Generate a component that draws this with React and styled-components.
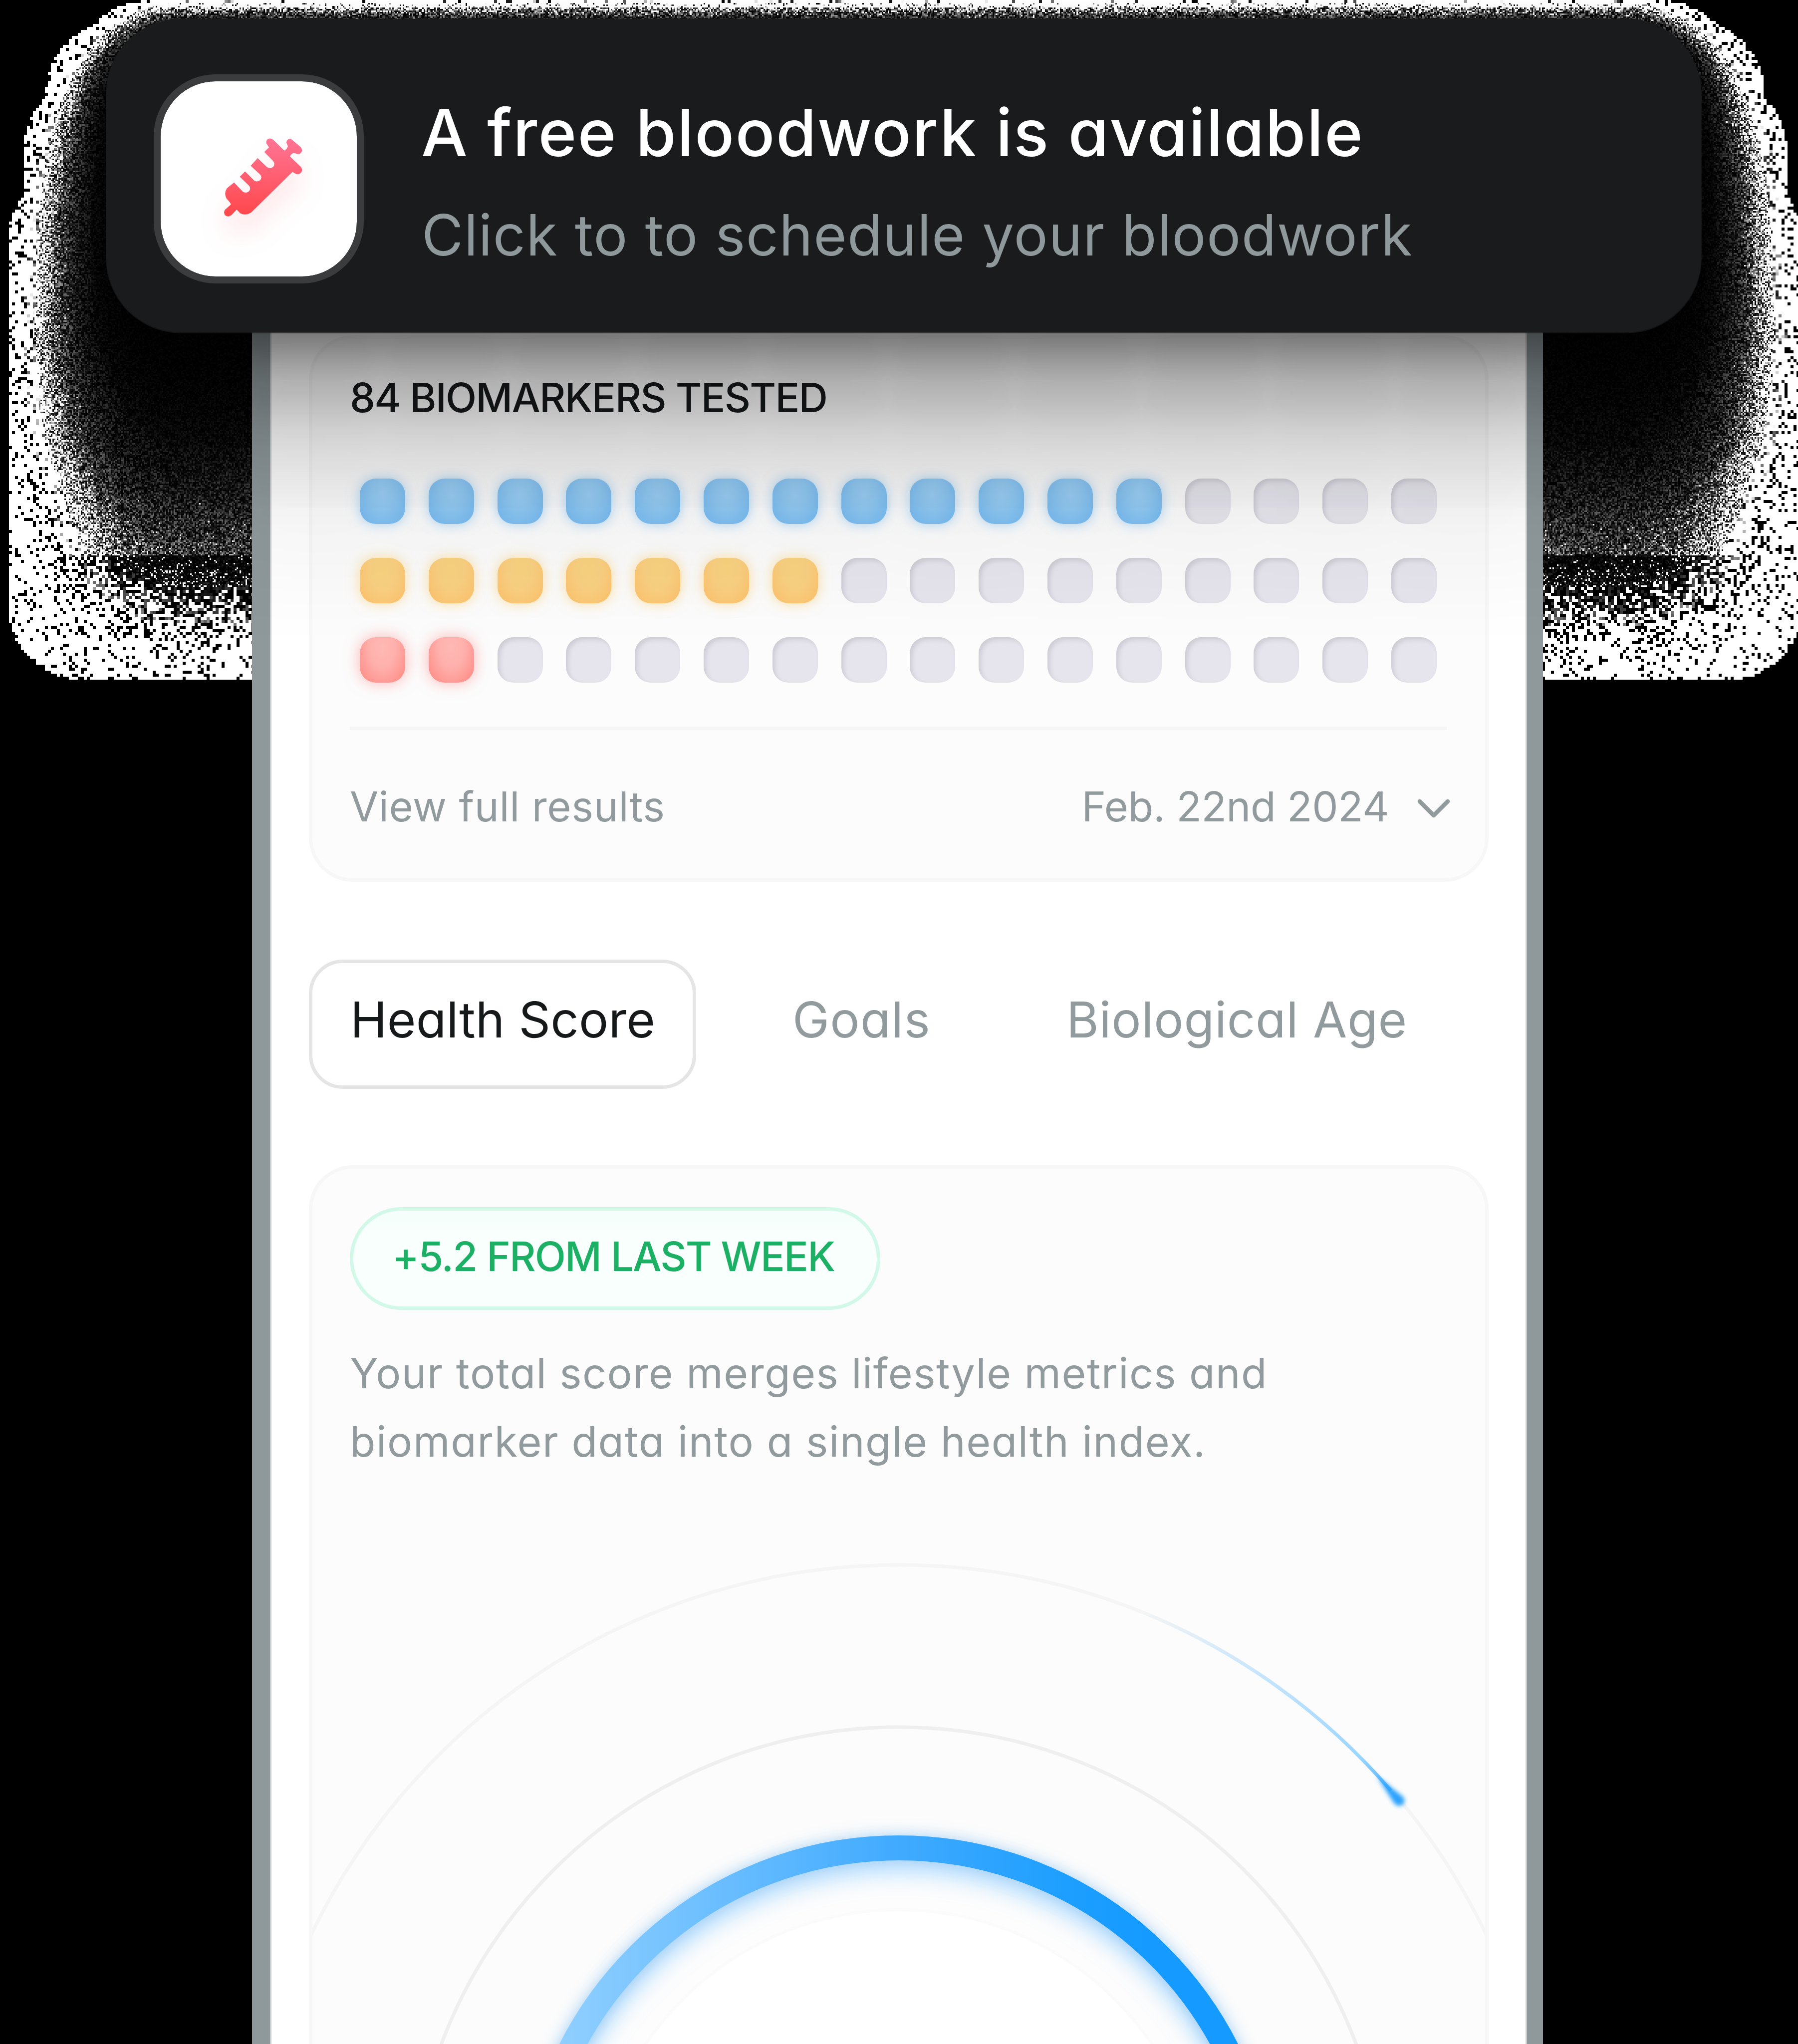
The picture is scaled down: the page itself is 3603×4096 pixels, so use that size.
import React, { useLayoutEffect, useRef } from "react";
import styled, { createGlobalStyle } from "styled-components";

const GlobalStyle = createGlobalStyle`
  * { box-sizing: border-box; }
  html, body { margin: 0; padding: 0; background: #000; }
`;

/* ---------- Layout shell ---------- */

const Page = styled.div`
  position: relative;
  width: 3603px;
  height: 4096px;
  overflow: hidden;
  background: #000;
  font-family: Inter, "Open Sans", sans-serif;
  font-feature-settings: "cv11" 1;
  display: flex;
  flex-direction: column;
  padding: 37px 194px 0 213px;
`;

const GrainCanvas = styled.canvas`
  position: absolute;
  left: 0;
  top: 0;
  width: 3603px;
  height: 1362px;
  image-rendering: pixelated;
`;

/* ---------- Notification ---------- */

const Notification = styled.section`
  position: relative;
  z-index: 2;
  flex: none;
  height: 629px;
  display: flex;
  align-items: flex-start;
  gap: 117px;
  padding: 112px 95px 0;
  border-radius: 150px;
  background: #191b1c;
  box-shadow:
    0 1px 0 1px rgba(25, 27, 28, 0.7),
    0 30px 69px rgba(0, 0, 0, 0.29),
    0 124px 124px rgba(0, 0, 0, 0.26),
    0 279px 167px rgba(0, 0, 0, 0.15),
    0 493px 197px rgba(0, 0, 0, 0.04);
`;

const IconTile = styled.div`
  flex: none;
  width: 421px;
  height: 419px;
  display: flex;
  align-items: center;
  justify-content: center;
  padding: 0 0 7px 16px;
  border: 14px solid #3b3c3d;
  border-radius: 124px;
  background: #fff;
  background-clip: padding-box;
`;

const SyringeSvg = styled.svg`
  width: 156px;
  height: 157px;
  overflow: visible;
  filter: drop-shadow(0 38px 26px rgba(255, 80, 100, 0.14));
`;

const NotificationText = styled.div`
  display: flex;
  flex-direction: column;
  gap: 55px;
  padding-top: 37px;
`;

const NotificationTitle = styled.div`
  font-size: 131px;
  line-height: 160px;
  font-weight: 500;
  letter-spacing: 2.2px;
  margin-left: -2px;
  color: #fff;
  white-space: nowrap;
`;

const NotificationSubtitle = styled.div`
  font-size: 114px;
  line-height: 140px;
  letter-spacing: 1.4px;
  margin-left: -1px;
  color: #8f999b;
  white-space: nowrap;
`;

/* ---------- Phone ---------- */

const Phone = styled.main`
  position: relative;
  flex: 1;
  margin: -366px 317px 0 292px;
  border: solid #8f999c;
  border-width: 0 32px 0 36px;
  background: #fff;
  box-shadow: inset 3px 0 0 #c9ced0, inset -3px 0 0 #c9ced0;
  padding: 372px 77px 0 78px;
  overflow: hidden;
`;

const Card = styled.section`
  display: flex;
  flex-direction: column;
  border: 7px solid #f7f7f7;
  border-radius: 88px;
  background: #fcfcfc;
  padding: 0 77px 0 75px;
`;

const BiomarkerCard = styled(Card)`
  height: 1095px;
  padding-top: 68px;
`;

const CardTitle = styled.h2`
  margin: 0 0 112px;
  font-size: 81px;
  line-height: 100px;
  font-weight: 500;
  letter-spacing: -1.8px;
  color: #16191a;
  white-space: nowrap;
`;

const DotGrid = styled.div`
  display: flex;
  flex-direction: column;
  gap: 68px;
  padding-left: 20px;
`;

const DotRow = styled.div`
  display: flex;
  gap: 46.8px;
`;

const tones = {
  blue: `background: radial-gradient(ellipse at 50% 32%, #9ccff6 0%, #91caf4 35%, #77bbf2 90%);
    box-shadow: 0 0 24px rgba(110, 185, 245, 0.55);`,
  amber: `background: radial-gradient(ellipse at 50% 25%, #f9d380 0%, #fad182 40%, #fcc26c 95%);
    box-shadow: 0 0 26px rgba(255, 205, 100, 0.6);`,
  red: `background: radial-gradient(ellipse at 50% 22%, #ffb9b5 0%, #ffb0ac 40%, #ff8d87 90%);
    box-shadow: 0 0 30px rgba(255, 120, 120, 0.55);`,
  empty: `background: #e6e5ed;
    box-shadow: inset 5px 5px 9px rgba(110, 110, 120, 0.2);`,
};

const Dot = styled.span`
  width: 91px;
  height: 91px;
  flex: none;
  border-radius: 32px;
  ${({ $tone }) => tones[$tone]}
`;

const Divider = styled.hr`
  width: 100%;
  height: 7px;
  margin: 88px 0 103px;
  border: 0;
  flex: none;
  background: #f5f5f5;
`;

const FooterRow = styled.div`
  display: flex;
  justify-content: space-between;
  align-items: center;
`;

const Muted = styled.span`
  font-size: 83px;
  line-height: 100px;
  letter-spacing: ${({ $ls }) => $ls}px;
  color: #919b9d;
  white-space: nowrap;
`;

const DateSelect = styled.div`
  display: flex;
  align-items: center;
  gap: 56px;
  margin-right: -8px;
`;

const ChevronSvg = styled.svg`
  width: 68px;
  height: 42px;
  margin-top: 10px;
`;

/* ---------- Tabs ---------- */

const Tabs = styled.nav`
  display: flex;
  margin: 156px 0 153px;
`;

const Tab = styled.button`
  height: 259px;
  padding: 53px 76px 0;
  margin: 0 0 0 ${({ $gap }) => $gap}px;
  border: 7px solid ${({ $active }) => ($active ? "#e5e5e5" : "transparent")};
  border-radius: 68px;
  background: ${({ $active }) => ($active ? "#fff" : "transparent")};
  color: ${({ $active }) => ($active ? "#16191a" : "#919b9d")};
  width: ${({ $width }) => $width}px;
  display: flex;
  align-items: flex-start;
  font: 400 99px/120px Inter, "Open Sans", sans-serif;
  font-feature-settings: "cv11" 1;
  letter-spacing: ${({ $ls }) => $ls}px;
  white-space: nowrap;
`;

/* ---------- Score card ---------- */

const ScoreCard = styled(Card)`
  height: 2200px;
  padding-top: 77px;
`;

const Pill = styled.div`
  align-self: flex-start;
  width: 1063px;
  height: 206px;
  padding: 42px 78px 0;
  border: 7px solid #d2f8e8;
  border-radius: 103px;
  background: linear-gradient(#f5fefb, #f9fffd 30%);
  font-size: 81px;
  line-height: 100px;
  font-weight: 500;
  letter-spacing: -1.8px;
  color: #1cb065;
  white-space: nowrap;
`;

const Description = styled.p`
  margin: 58px 0 0;
  font-size: 84px;
  line-height: 137px;
  letter-spacing: ${({ $ls }) => $ls}px;
  color: #919b9d;
  white-space: nowrap;
  & + & {
    margin-top: 0;
  }
`;

const GaugeSvg = styled.svg`
  flex: none;
  display: block;
  width: 2350px;
  height: 1139px;
  margin-left: -75px;
`;

/* ---------- Shadow grain ---------- */

const SHADOWS = [
  [30, 34, 0.29],
  [124, 62, 0.26],
  [279, 84, 0.15],
  [493, 100, 0.04],
];
const BOX = { left: 213, right: 3409, top: 37, bottom: 666, radius: 150 };
const COARSE_BELOW = 2.6;
const TAIL_TOP = 1110;

const sigmoid = (z) => 1 / (1 + Math.exp(-1.702 * z));

function hash(x, y, seed) {
  let h = (x * 374761393 + y * 668265263 + seed * 1442695041) | 0;
  h = Math.imul(h ^ (h >>> 13), 1274126177);
  h = Math.imul(h ^ (h >>> 15), 2246822519);
  return ((h ^ (h >>> 16)) >>> 0) / 4294967296;
}

/* Signed distance to the rounded box, moved down by dy and grown on every side; negative inside. */
function boxDistance(x, y, dy, grow) {
  const r = BOX.radius;
  const cx = (BOX.left + BOX.right) / 2;
  const cy = (BOX.top + BOX.bottom) / 2 + dy;
  const qx = Math.abs(x - cx) - ((BOX.right - BOX.left) / 2 + grow - r);
  const qy = Math.abs(y - cy) - ((BOX.bottom - BOX.top) / 2 + grow - r);
  return (
    Math.hypot(Math.max(qx, 0), Math.max(qy, 0)) +
    Math.min(Math.max(qx, qy), 0) -
    r
  );
}

/* Shadow opacity (0-255) at a point, and how far inside the blur's outer reach it lies. */
function sampleShadow(x, y) {
  let keep = 1;
  let reach = -Infinity;
  for (const [dy, sigma, alpha] of SHADOWS) {
    const d = boxDistance(x, y, dy, 0);
    keep *= 1 - alpha * sigmoid(-d / (sigma * 0.88));
    reach = Math.max(reach, -boxDistance(x, y, dy, 2 * sigma));
  }
  return [255 * (1 - keep), reach];
}

function grainLevel(i, j, cell) {
  let [a, reach] = sampleShadow(i * cell, j * cell);
  let ri = i;
  let rj = j;
  const tail = j * cell > TAIL_TOP;
  if (a < (tail ? 4.5 : COARSE_BELOW)) {
    ri = i >> 1;
    rj = j >> 1;
    [a, reach] = sampleShadow(ri * cell * 2, rj * cell * 2);
  }
  if (reach <= 0) return 0;
  const lit = hash(ri, rj, 2);
  const level = hash(ri, rj, 3);
  let white = tail
    ? 0.9 * Math.exp(-Math.pow(a / 3.1, 1.3))
    : 0.9 * Math.exp(-Math.pow(a / 4, 1.5));
  if (reach < 14) white = Math.max(white, 0.82);
  if (lit < white) return 255;
  if (a < 1.5) return 0;
  if (tail) return level < 0.4 ? Math.min(255, (255 * lit) / a) : 0;
  return Math.min(255, (255 * (a < 40 ? 6 : 4.5) * level * level) / a);
}

function ShadowGrain() {
  const ref = useRef(null);
  useLayoutEffect(() => {
    const { width, height } = ref.current;
    const ctx = ref.current.getContext("2d");
    const img = ctx.createImageData(width, height);
    for (let j = 0; j < height; j++) {
      for (let i = 0; i < width; i++) {
        const k = (j * width + i) * 4;
        const v = grainLevel(i, j, 3);
        img.data[k] = v;
        img.data[k + 1] = v;
        img.data[k + 2] = v;
        img.data[k + 3] = 255;
      }
    }
    ctx.putImageData(img, 0, 0);
  }, []);
  return <GrainCanvas ref={ref} width={1201} height={454} />;
}

/* ---------- Drawings ---------- */

function Syringe() {
  return (
    <SyringeSvg viewBox="228 165 600 603">
      <defs>
        <linearGradient id="syringe" x1="0" y1="0" x2="0" y2="1">
          <stop offset="0" stopColor="#ff7595" />
          <stop offset="1" stopColor="#ff474b" />
        </linearGradient>
      </defs>
      <path
        fill="url(#syringe)"
        d="M570 168Q588 164 606 175L692 260Q712 250 720 226L709 200Q706 170 742 168L818 232Q832 246 828 264Q820 286 798 288L764 277Q742 288 735 304L822 388Q834 404 825 425Q810 446 782 440L755 424L436 738Q395 764 352 742L325 715L286 756Q256 778 234 756Q222 735 236 715L281 675Q274 655 248 632Q224 590 250 550L305 506L372 576Q396 592 418 575Q438 556 422 532L349 462L390 420L462 492Q484 504 504 490Q524 470 508 446L433 377L487 317L558 387Q584 404 606 386Q624 364 608 342L538 270L574 235L555 205Q548 180 570 168Z"
      />
    </SyringeSvg>
  );
}

function Chevron() {
  return (
    <ChevronSvg viewBox="0 0 68 42" fill="none">
      <path
        d="M6 6L34 34L62 6"
        stroke="#919b9d"
        strokeWidth="8.5"
        strokeLinecap="round"
        strokeLinejoin="round"
      />
    </ChevronSvg>
  );
}

function Gauge() {
  return (
    <GaugeSvg viewBox="626 2957 2350 1139">
      <defs>
        <linearGradient id="ring" gradientUnits="userSpaceOnUse" x1="1120" y1="4000" x2="2300" y2="4000">
          <stop offset="0" stopColor="#90cfff" />
          <stop offset="0.3" stopColor="#66bcff" />
          <stop offset="0.58" stopColor="#40aaff" />
          <stop offset="0.88" stopColor="#1b9eff" />
          <stop offset="1" stopColor="#159aff" />
        </linearGradient>
        <linearGradient id="trail" gradientUnits="userSpaceOnUse" x1="2290" y1="3220" x2="2790" y2="3590">
          <stop offset="0" stopColor="#bfe2fb" stopOpacity="0" />
          <stop offset="0.5" stopColor="#bfe3ff" />
          <stop offset="0.85" stopColor="#9cd6ff" />
          <stop offset="1" stopColor="#4fb2ff" />
        </linearGradient>
        <filter id="glow" filterUnits="userSpaceOnUse" x="626" y="3400" width="2350" height="1500">
          <feGaussianBlur stdDeviation="23" />
        </filter>
        <filter id="halo" filterUnits="userSpaceOnUse" x="626" y="3400" width="2350" height="1500">
          <feGaussianBlur stdDeviation="15" />
        </filter>
        <filter id="soft" x="-50%" y="-50%" width="200%" height="200%">
          <feGaussianBlur stdDeviation="4.5" />
        </filter>
      </defs>
      <g fill="none">
        <circle cx="1801" cy="4442" r="1306" stroke="#f5f5f5" strokeWidth="7" />
        <circle cx="1801" cy="4440" r="979" stroke="#efefef" strokeWidth="7" />
        <circle cx="1801" cy="4440" r="655" stroke="#fdfdfd" strokeWidth="90" />
        <circle cx="1801" cy="4440" r="613" fill="#fff" stroke="#fbfbfb" strokeWidth="6" />
        <circle cx="1801" cy="4460" r="729" stroke="#6bbcff" strokeOpacity="0.52" strokeWidth="42" filter="url(#glow)" />
        <circle cx="1801" cy="4440" r="738" stroke="#5ba8e8" strokeOpacity="0.45" strokeWidth="50" filter="url(#halo)" />
        <circle cx="1801" cy="4440" r="737" stroke="url(#ring)" strokeWidth="50" />
        <path d="M2290 3231A1306 1306 0 0 1 2787 3588" stroke="url(#trail)" strokeWidth="7" />
      </g>
      <path
        d="M2758 3558L2812 3601Q2818 3611 2810 3617Q2802 3622 2794 3614Z"
        fill="#2ba2ff"
        filter="url(#soft)"
      />
    </GaugeSvg>
  );
}

/* ---------- Screen ---------- */

const COLUMNS = 16;
const ROWS = [
  { tone: "blue", count: 12 },
  { tone: "amber", count: 7 },
  { tone: "red", count: 2 },
];

export default function App() {
  return (
    <Page>
      <GlobalStyle />
      <ShadowGrain />
      <Notification>
        <IconTile>
          <Syringe />
        </IconTile>
        <NotificationText>
          <NotificationTitle>A free bloodwork is available</NotificationTitle>
          <NotificationSubtitle>Click to to schedule your bloodwork</NotificationSubtitle>
        </NotificationText>
      </Notification>

      <Phone>
        <BiomarkerCard>
          <CardTitle>84 BIOMARKERS TESTED</CardTitle>
          <DotGrid>
            {ROWS.map(({ tone, count }) => (
              <DotRow key={tone}>
                {Array.from({ length: COLUMNS }, (_, i) => (
                  <Dot key={i} $tone={i < count ? tone : "empty"} />
                ))}
              </DotRow>
            ))}
          </DotGrid>
          <Divider />
          <FooterRow>
            <Muted $ls={0.6}>View full results</Muted>
            <DateSelect>
              <Muted $ls={-0.5}>Feb. 22nd 2024</Muted>
              <Chevron />
            </DateSelect>
          </FooterRow>
        </BiomarkerCard>

        <Tabs>
          <Tab $active $gap={0} $width={776} $ls={0.2}>Health Score</Tab>
          <Tab $gap={110} $width={440} $ls={1.4}>Goals</Tab>
          <Tab $gap={109} $width={840} $ls={0.8}>Biological Age</Tab>
        </Tabs>

        <ScoreCard>
          <Pill>+5.2 FROM LAST WEEK</Pill>
          <Description $ls={1.4}>Your total score merges lifestyle metrics and</Description>
          <Description $ls={1.6}>biomarker data into a single health index.</Description>
          <Gauge />
        </ScoreCard>
      </Phone>
    </Page>
  );
}
